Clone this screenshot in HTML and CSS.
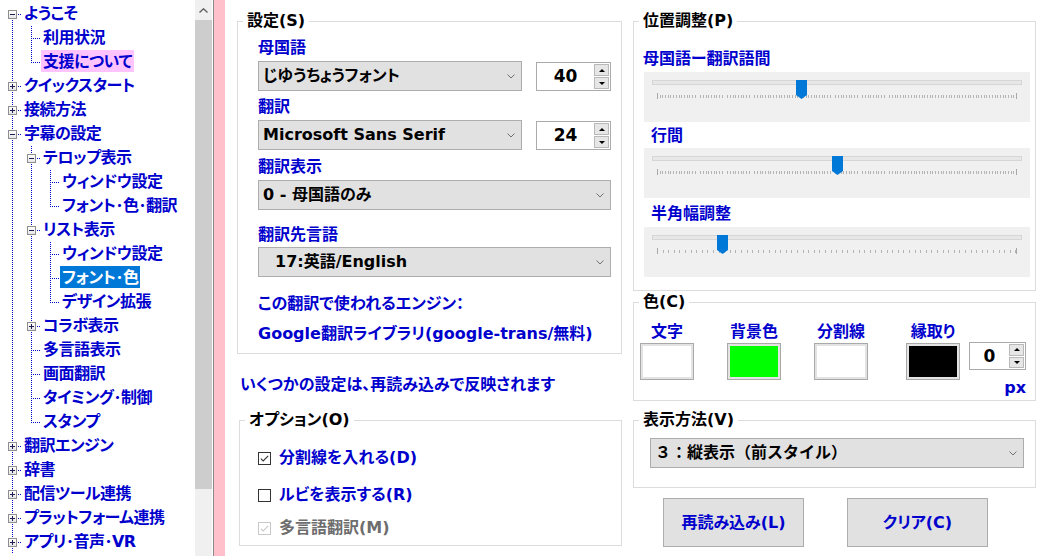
FILE: index.html
```html
<!DOCTYPE html>
<html lang="ja">
<head>
<meta charset="utf-8">
<title>設定 - フォント・色</title>
<link rel="stylesheet" href="styles.css">
</head>
<body>
<div class="app">
  <!-- tree menu -->
  <div class="tree">
    <div class="row"><span class="c b top"><i class="box minus"></i></span><span class="lbl">ようこそ</span></div>
    <div class="row"><span class="c v"></span><span class="c t"></span><span class="lbl">利用状況</span></div>
    <div class="row"><span class="c v"></span><span class="c e"></span><span class="lbl hot">支援について</span></div>
    <div class="row"><span class="c b"><i class="box plus"></i></span><span class="lbl">クイックスタート</span></div>
    <div class="row"><span class="c b"><i class="box plus"></i></span><span class="lbl">接続方法</span></div>
    <div class="row"><span class="c b"><i class="box minus"></i></span><span class="lbl">字幕の設定</span></div>
    <div class="row"><span class="c v"></span><span class="c b"><i class="box minus"></i></span><span class="lbl">テロップ表示</span></div>
    <div class="row"><span class="c v"></span><span class="c v"></span><span class="c t"></span><span class="lbl">ウィンドウ設定</span></div>
    <div class="row"><span class="c v"></span><span class="c v"></span><span class="c e"></span><span class="lbl">フォント･色･翻訳</span></div>
    <div class="row"><span class="c v"></span><span class="c b"><i class="box minus"></i></span><span class="lbl">リスト表示</span></div>
    <div class="row"><span class="c v"></span><span class="c v"></span><span class="c t"></span><span class="lbl">ウィンドウ設定</span></div>
    <div class="row"><span class="c v"></span><span class="c v"></span><span class="c t"></span><span class="lbl sel">フォント･色</span></div>
    <div class="row"><span class="c v"></span><span class="c v"></span><span class="c e"></span><span class="lbl">デザイン拡張</span></div>
    <div class="row"><span class="c v"></span><span class="c b"><i class="box plus"></i></span><span class="lbl">コラボ表示</span></div>
    <div class="row"><span class="c v"></span><span class="c t"></span><span class="lbl">多言語表示</span></div>
    <div class="row"><span class="c v"></span><span class="c t"></span><span class="lbl">画面翻訳</span></div>
    <div class="row"><span class="c v"></span><span class="c t"></span><span class="lbl">タイミング･制御</span></div>
    <div class="row"><span class="c v"></span><span class="c e"></span><span class="lbl">スタンプ</span></div>
    <div class="row"><span class="c b"><i class="box plus"></i></span><span class="lbl">翻訳エンジン</span></div>
    <div class="row"><span class="c b"><i class="box plus"></i></span><span class="lbl">辞書</span></div>
    <div class="row"><span class="c b"><i class="box plus"></i></span><span class="lbl">配信ツール連携</span></div>
    <div class="row"><span class="c b"><i class="box plus"></i></span><span class="lbl">プラットフォーム連携</span></div>
    <div class="row"><span class="c b"><i class="box plus"></i></span><span class="lbl">アプリ･音声･VR</span></div>
  </div>

  <div class="vscroll">
    <div class="sb-up"><svg width="9" height="5" viewBox="0 0 9 5"><polyline points="0.5,4.5 4.5,0.8 8.5,4.5" fill="none" stroke="#606060" stroke-width="1.4"/></svg></div>
    <div class="sb-thumb"></div>
    <div class="sb-track"></div>
  </div>
  <div class="splitter"></div>

  <div class="main">
    <div class="col-left">
      <fieldset class="grp">
        <legend>設定(S)</legend>
        <div class="gbody set-body">
          <div class="lab">母国語</div>
          <div class="frow">
            <div class="combo short"><span>じゆうちょうフォント</span><svg class="chev" width="8" height="5" viewBox="0 0 8 5"><polyline points="0.5,0.5 4,4 7.5,0.5" fill="none" stroke="#707070" stroke-width="1"/></svg></div>
            <div class="spin"><span class="num">40</span><span class="spin-btns"><b class="sbtn up"></b><b class="sbtn dn"></b></span></div>
          </div>
          <div class="lab lab-2">翻訳</div>
          <div class="frow">
            <div class="combo short"><span>Microsoft Sans Serif</span><svg class="chev" width="8" height="5" viewBox="0 0 8 5"><polyline points="0.5,0.5 4,4 7.5,0.5" fill="none" stroke="#707070" stroke-width="1"/></svg></div>
            <div class="spin"><span class="num">24</span><span class="spin-btns"><b class="sbtn up"></b><b class="sbtn dn"></b></span></div>
          </div>
          <div class="lab lab-3">翻訳表示</div>
          <div class="combo full mt4"><span>0 - 母国語のみ</span><svg class="chev" width="8" height="5" viewBox="0 0 8 5"><polyline points="0.5,0.5 4,4 7.5,0.5" fill="none" stroke="#707070" stroke-width="1"/></svg></div>
          <div class="lab lab-4">翻訳先言語</div>
          <div class="combo full mt3 indent"><span>17:英語/English</span><svg class="chev" width="8" height="5" viewBox="0 0 8 5"><polyline points="0.5,0.5 4,4 7.5,0.5" fill="none" stroke="#707070" stroke-width="1"/></svg></div>
          <div class="lab lab-5">この翻訳で使われるエンジン：</div>
          <div class="lab lab-6">Google翻訳ライブラリ(google-trans/無料)</div>
        </div>
      </fieldset>

      <p class="note">いくつかの設定は、再読み込みで反映されます</p>

      <fieldset class="grp grp-opt">
        <legend>オプション(O)</legend>
        <div class="gbody opt-body">
          <div class="chk">
            <svg width="13" height="13" viewBox="0 0 13 13"><rect x="0.5" y="0.5" width="12" height="12" fill="#fff" stroke="#333"/><polyline points="2.8,6.6 5.2,9 10.2,3.8" fill="none" stroke="#333" stroke-width="1.1"/></svg>
            <span>分割線を入れる(D)</span>
          </div>
          <div class="chk chk-2">
            <svg width="13" height="13" viewBox="0 0 13 13"><rect x="0.5" y="0.5" width="12" height="12" fill="#fff" stroke="#333"/></svg>
            <span>ルビを表示する(R)</span>
          </div>
          <div class="chk chk-3 off">
            <svg width="13" height="13" viewBox="0 0 13 13"><rect x="0.5" y="0.5" width="12" height="12" fill="#fff" stroke="#c8c8c8"/><polyline points="2.8,6.6 5.2,9 10.2,3.8" fill="none" stroke="#c8c8c8" stroke-width="1.1"/></svg>
            <span>多言語翻訳(M)</span>
          </div>
        </div>
      </fieldset>
    </div>

    <div class="col-right">
      <fieldset class="grp">
        <legend>位置調整(P)</legend>
        <div class="gbody pos-body">
          <div class="lab slab-1">母国語ー翻訳語間</div>
          <div class="slider">
            <div class="rail">
              <div class="track"></div>
              <div class="ticks"></div>
              <svg class="thumb" style="left:40%" width="11" height="19" viewBox="0 0 11 19"><path d="M0 0H11V15L5.5 19L0 15Z" fill="#0078d7"/></svg>
            </div>
          </div>
          <div class="lab slab">行間</div>
          <div class="slider">
            <div class="rail">
              <div class="track"></div>
              <div class="ticks"></div>
              <svg class="thumb" style="left:50%" width="11" height="19" viewBox="0 0 11 19"><path d="M0 0H11V15L5.5 19L0 15Z" fill="#0078d7"/></svg>
            </div>
          </div>
          <div class="lab slab slab-3">半角幅調整</div>
          <div class="slider">
            <div class="rail">
              <div class="track"></div>
              <div class="ticks wide"></div>
              <svg class="thumb" style="left:18%" width="11" height="19" viewBox="0 0 11 19"><path d="M0 0H11V15L5.5 19L0 15Z" fill="#0078d7"/></svg>
            </div>
          </div>
        </div>
      </fieldset>

      <fieldset class="grp grp-color">
        <legend>色(C)</legend>
        <div class="gbody color-body">
          <div class="ccol"><span class="lab">文字</span><span class="swatch sw-white"></span></div>
          <div class="ccol"><span class="lab">背景色</span><span class="swatch sw-green"></span></div>
          <div class="ccol"><span class="lab">分割線</span><span class="swatch sw-white"></span></div>
          <div class="ccol ccol-4"><span class="lab">縁取り</span><span class="swatch sw-black"></span></div>
          <div class="pxcol">
            <div class="spin spin-sm"><span class="num">0</span><span class="spin-btns"><b class="sbtn up"></b><b class="sbtn dn"></b></span></div>
            <div class="lab px">px</div>
          </div>
        </div>
      </fieldset>

      <fieldset class="grp grp-view">
        <legend>表示方法(V)</legend>
        <div class="gbody view-body">
          <div class="combo full wide-punct"><span>３：縦表示（前スタイル）</span><svg class="chev" width="8" height="5" viewBox="0 0 8 5"><polyline points="0.5,0.5 4,4 7.5,0.5" fill="none" stroke="#707070" stroke-width="1"/></svg></div>
        </div>
      </fieldset>

      <div class="btns">
        <div class="btn">再読み込み(L)</div>
        <div class="btn">クリア(C)</div>
      </div>
    </div>
  </div>
</div>
</body>
</html>
```

FILE: styles.css
```css
body {
    margin: 0;
    width: 1059px;
    height: 556px;
    overflow: hidden;
    background: #fff;
    color: #0000cd;
    font: 700 16px/20px "DejaVu Sans", "Noto Sans CJK JP", sans-serif;
    font-feature-settings: "palt";
    --dotv: repeating-linear-gradient(to bottom, #0000cd 0 1px, transparent 1px 2px);
    --doth: repeating-linear-gradient(to right, #0000cd 0 1px, transparent 1px 2px);
}

.app {
    display: flex;
    height: 556px;
}

/* tree */
.tree {
    width: 195px;
    flex: none;
    box-sizing: border-box;
    padding: 2px 0 0 3px;
    overflow: hidden;
    letter-spacing: -0.5px;
}

.row {
    display: flex;
    height: 24px;
}

.c {
    flex: none;
    width: 19px;
    height: 24px;
}

.c.v {
    background: var(--dotv) 9px 0 / 1px 24px no-repeat;
}

.c.t {
    background: var(--dotv) 9px 0 / 1px 24px no-repeat,
        var(--doth) 11px 12px / 8px 1px no-repeat;
}

.c.e {
    background: var(--dotv) 9px 0 / 1px 13px no-repeat,
        var(--doth) 11px 12px / 8px 1px no-repeat;
}

.c.b {
    display: flex;
    align-items: flex-start;
    background: var(--dotv) 9px 0 / 1px 24px no-repeat,
        var(--doth) 15px 12px / 4px 1px no-repeat;
}

.c.b.top {
    background: var(--dotv) 9px 16px / 1px 8px no-repeat,
        var(--doth) 15px 12px / 4px 1px no-repeat;
}

.box {
    width: 9px;
    height: 9px;
    box-sizing: border-box;
    margin: 8px 0 0 5px;
    border: 1px solid #8e8e8e;
    background-color: #fff;
}

.box.minus {
    background: linear-gradient(#1d1d50, #1d1d50) 1px 3px / 5px 1px no-repeat, linear-gradient(#fff, #e6e6e6);
}

.box.plus {
    background: linear-gradient(#1d1d50, #1d1d50) 1px 3px / 5px 1px no-repeat,
        linear-gradient(#1d1d50, #1d1d50) 3px 1px / 1px 5px no-repeat, linear-gradient(#fff, #e6e6e6);
}

.lbl {
    height: 22px;
    box-sizing: border-box;
    padding: 1px 2px 0;
    line-height: 21px;
    white-space: nowrap;
}

.lbl.hot {
    background: #ffc4ff;
}

.lbl.sel {
    background: #0078d7;
    color: #fff;
}

/* scrollbar + splitter */
.vscroll {
    width: 17px;
    flex: none;
    display: flex;
    flex-direction: column;
    background: #f0f0f0;
}

.sb-up {
    height: 20px;
    display: flex;
    align-items: center;
    justify-content: center;
}

.sb-thumb {
    height: 469px;
    background: #cdcdcd;
}

.splitter {
    width: 11px;
    flex: none;
    border-left: 1px solid #fff;
    box-shadow: inset 1px 0 0 #8a8a8a;
    padding-left: 1px;
    background: #ffc0cb;
}

/* main */
.main {
    flex: 1;
    display: flex;
    gap: 11px;
    padding: 11px 0 0 12px;
}

.col-left {
    width: 385px;
    flex: none;
}

.col-right {
    width: 403px;
    flex: none;
}

.grp {
    margin: 0;
    padding: 0;
    min-width: 0;
    border: 1px solid #dcdcdc;
}

.grp legend {
    margin-left: 5px;
    padding: 0 4px;
    color: #000;
    line-height: 20px;
}

.lab {
    display: block;
    height: 20px;
    box-sizing: border-box;
    padding-top: 1px;
    line-height: 19px;
    white-space: nowrap;
}

.wide-punct {
    font-feature-settings: normal;
}

.set-body {
    padding: 6px 10px 10px 20px;
}

.frow {
    display: flex;
    justify-content: space-between;
    align-items: flex-start;
    margin-top: 4px;
}

.lab-2 { margin-top: 5px; }
.lab-3 { margin-top: 6px; }
.lab-4 { margin-top: 14px; }
.lab-5 { margin-top: 16px; }
.lab-6 { margin-top: 10px; }
.mt4 { margin-top: 4px; }
.mt3 { margin-top: 3px; }

.combo {
    height: 30px;
    box-sizing: border-box;
    display: flex;
    align-items: center;
    justify-content: space-between;
    padding: 0 6px 0 4px;
    background: #e1e1e1;
    border: 1px solid #adadad;
    color: #000;
    white-space: nowrap;
}

.combo.short {
    width: 264px;
}

.combo.indent {
    padding-left: 16px;
}

.spin {
    width: 75px;
    height: 29px;
    margin-top: 1px;
    box-sizing: border-box;
    display: flex;
    background: #fff;
    border: 1px solid #ababab;
    color: #000;
}

.spin .num {
    flex: 1;
    text-align: center;
    font-size: 17px;
    line-height: 27px;
}

.spin-btns {
    width: 15px;
    display: flex;
    flex-direction: column;
    gap: 1px;
    padding: 1px 1px 1px 0;
}

.sbtn {
    flex: 1;
    display: flex;
    align-items: center;
    justify-content: center;
    background: #e6e6e6;
    border: 1px solid #b9b9b9;
}

.sbtn.up::before {
    content: "";
    border: 3px solid transparent;
    border-top: 0;
    border-bottom: 3px solid #000;
}

.sbtn.dn::before {
    content: "";
    border: 3px solid transparent;
    border-bottom: 0;
    border-top: 3px solid #000;
}

.note {
    height: 20px;
    box-sizing: border-box;
    margin: 20px 0 0 3px;
    padding-top: 1px;
    line-height: 19px;
}

.grp-opt {
    margin: 16px 0 0 2px;
}

.opt-body {
    padding: 17px 10px 8px 18px;
}

.chk {
    display: flex;
    align-items: center;
    gap: 8px;
    height: 20px;
}

.chk span {
    padding-top: 1px;
    line-height: 19px;
}

.chk svg {
    margin-top: 2px;
}

.chk-2 { margin-top: 17px; }
.chk-3 { margin-top: 13px; }

.chk.off {
    color: #6d6d6d;
}

/* sliders */
.pos-body {
    padding: 17px 5px 13px 10px;
}

.slab-1 { margin-left: -1px; }
.slab { margin: 3px 0 0 7px; }
.slab-3 { margin-top: 5px; }

.slider {
    height: 50px;
    box-sizing: border-box;
    margin-top: 4px;
    padding: 2px 13px 0;
    background: #f0f0f0;
}

.slab + .slider { margin-top: 3px; }
.slab-3 + .slider { margin-top: 4px; }

.rail {
    position: relative;
    height: 26px;
}

.track {
    height: 5px;
    box-sizing: border-box;
    margin: 6px -5px 0;
    background: #e7e7e7;
    border: 1px solid #d6d6d6;
}

.ticks {
    height: 6px;
    margin-top: 8px;
    box-sizing: border-box;
    border-left: 1px solid #a8a8a8;
    border-right: 1px solid #a8a8a8;
    background: repeating-linear-gradient(90deg, transparent 0 1.7px, #b4b4b4 1.7px 2.7px) 0 2px / 100% 3px no-repeat;
}

.ticks.wide {
    background: repeating-linear-gradient(90deg, transparent 0 4.6px, #b4b4b4 4.6px 5.6px) 0 2px / 100% 3px no-repeat;
}

.thumb {
    position: absolute;
    top: 0;
    margin-left: -5px;
}

/* colours */
.grp-color {
    margin-top: 1px;
}

.color-body {
    display: flex;
    align-items: flex-start;
    padding: 9px 11px 3px 6px;
}

.ccol {
    width: 54px;
    display: flex;
    flex-direction: column;
    align-items: center;
    margin-right: 33px;
    white-space: nowrap;
}

.ccol-4 {
    margin-left: 5px;
    margin-right: 9px;
}

.swatch {
    width: 54px;
    height: 37px;
    margin-top: 2px;
    box-sizing: border-box;
    border: 1px solid #a9a9a9;
    box-shadow: inset 0 0 0 2px #e3e3e3;
}

.sw-white { background: #fff; }
.sw-green { background: #00ff00; }
.sw-black { background: #000; }

.pxcol {
    width: 57px;
}

.spin.spin-sm {
    width: 57px;
    height: 28px;
    margin-top: 21px;
}

.spin-sm .num {
    line-height: 26px;
}

.px {
    margin-top: 7px;
    text-align: right;
}

.grp-view {
    margin-top: 9px;
}

.view-body {
    padding: 8px 11px 19px 16px;
}

.btns {
    display: flex;
    gap: 43px;
    margin: 10px 0 0 30px;
}

.btn {
    width: 141px;
    height: 49px;
    box-sizing: border-box;
    display: flex;
    align-items: center;
    justify-content: center;
    background: #e1e1e1;
    border: 1px solid #adadad;
}
```
